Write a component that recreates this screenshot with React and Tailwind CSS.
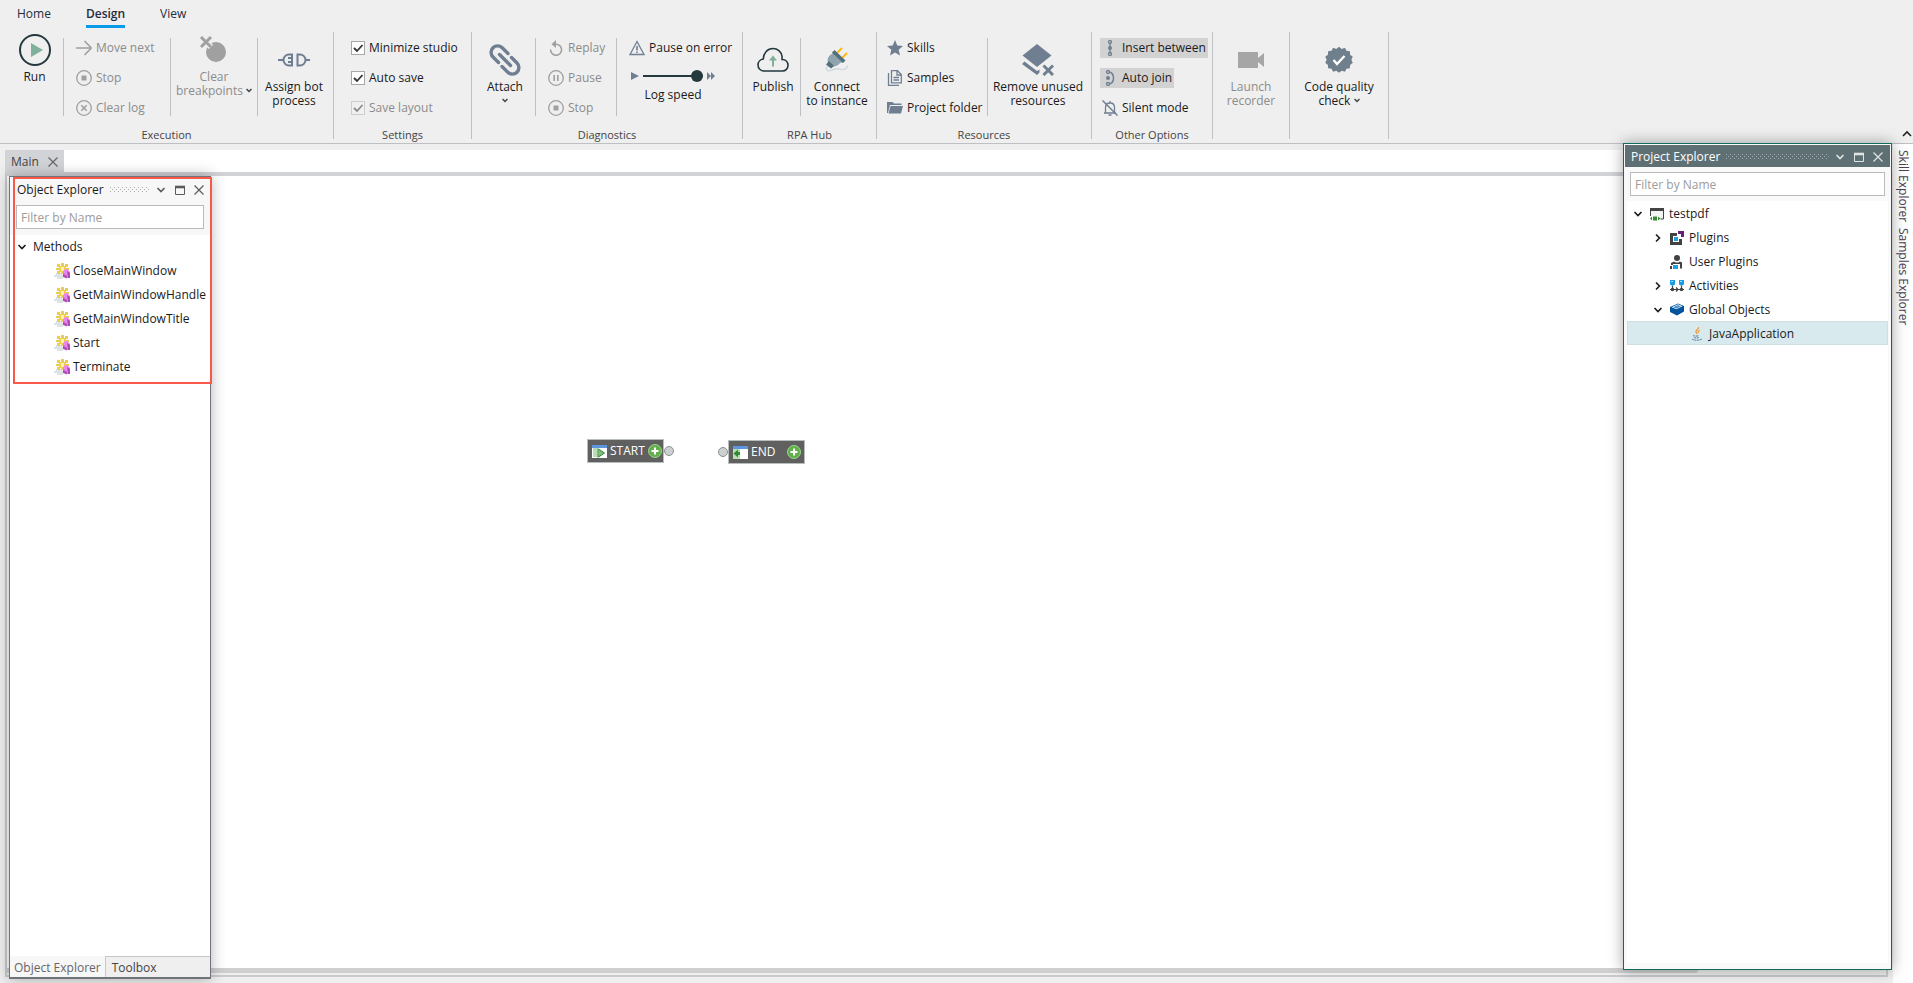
import React, { useState } from 'react';

/* ---------- small shared glyphs ---------- */

function Chevron({ className = '', dir = 'down' }) {
  const d = { down: 'M1.5 3 5 6.5 8.5 3', right: 'M3 1.5 6.5 5 3 8.5', up: 'M1 7 5 3 9 7' }[dir];
  return (
    <svg viewBox="0 0 10 10" className={`size-[10px] shrink-0 ${className}`} fill="none" stroke="currentColor" strokeWidth="1.6">
      <path d={d} />
    </svg>
  );
}

function SmallChevron() {
  return (
    <svg viewBox="0 0 6 5" className="inline-block w-[6px] h-[5px] mb-[2px]" fill="none" stroke="#444" strokeWidth="1.5">
      <path d="M.5 1 3 3.5 5.5 1" />
    </svg>
  );
}

function CloseIcon() {
  return (
    <svg viewBox="0 0 10 10" className="size-[10px]" fill="none" stroke="currentColor" strokeWidth="1.2">
      <path d="M.5.5l9 9M9.5.5l-9 9" />
    </svg>
  );
}

function MaximizeIcon() {
  return (
    <svg viewBox="0 0 10 10" className="size-[10px]" fill="none" stroke="currentColor">
      <path d="M.5 1.5h9v8h-9z" />
      <path d="M0 2h10" strokeWidth="2.6" />
    </svg>
  );
}

/* ---------- ribbon icons ---------- */

const RunIcon = () => (
  <svg viewBox="0 0 32 32" className="size-8">
    <circle cx="16" cy="16" r="15" fill="none" stroke="#24393e" strokeWidth="2" />
    <path d="M12 9v14l12-7z" fill="#7fb09b" />
  </svg>
);

const ClearBreakpointsIcon = () => (
  <svg viewBox="0 0 32 32" className="size-8">
    <circle cx="18" cy="18" r="10" fill="#a0a0a0" />
    <path d="M3 3l10 10M13 3L3 13" stroke="#efefef" strokeWidth="6" />
    <path d="M3 3l10 10M13 3L3 13" stroke="#a0a0a0" strokeWidth="3" />
  </svg>
);

const PlugsIcon = () => (
  <svg viewBox="0 0 32 32" className="size-8" fill="none" stroke="#6f7f91" strokeWidth="2">
    <path d="M0 16h5M14 10.500h-3a5.500 5.500 0 0 0 0 11h3M14 9.500v13M10 14h4M10 18h4" />
    <path d="M19.500 10.500v11h2.500a5.500 5.500 0 0 0 0-11zM27.500 16h4.500" />
  </svg>
);

const LinkIcon = () => (
  <svg viewBox="0 0 32 32" className="size-8" fill="none" stroke="#6f7f91" strokeWidth="3.400" strokeLinecap="round">
    <path d="M9.500 18.500 4 13a6.500 6.500 0 0 1 0-9.200a6.500 6.500 0 0 1 9.200 0L19 9.500" />
    <path d="M10.500 10.500l11 11" />
    <path d="M13 22.500l5.800 5.700a6.500 6.500 0 0 0 9.200 0a6.500 6.500 0 0 0 0-9.200L22.500 13.500" />
  </svg>
);

const CloudIcon = () => (
  <svg viewBox="0 0 32 32" className="size-8">
    <path
      d="M7 27a6 6 0 0 1-6-6c0-3.200 2.300-5.600 5.300-6C6.500 9 10.500 4.500 16 4.500c4.500 0 8.300 3 9 7.800c.2 1.300.1 2.200 0 3.200 3.500-.2 6 2.300 6 5.700 0 3.300-2.400 5.800-5.500 5.800z"
      fill="none" stroke="#24393e" strokeWidth="1.600"
    />
    <path d="M16 11.500l4 5h-3v6h-2v-6h-3z" fill="#7fb09b" />
  </svg>
);

const PowerPlugIcon = () => (
  <svg viewBox="0 0 32 32" className="size-8">
    <path d="M7 22c-3 2-2 5.500 2 4.500s6-2.500 9-1.500 7 1 9-3.500" fill="none" stroke="#cfd8dc" strokeWidth="1.400" />
    <path d="M16 9l5-5M21 14l5-5" stroke="#fdbb11" strokeWidth="2" />
    <path d="M12 8l11 10-4 1c-2 3-6 4-9 3l-3-3c-1-4 0-7 4-9z" fill="#90a4ae" />
    <path d="M13.500 6l11 10.500-2.500 2.500L11 8.500z" fill="#546e7a" />
    <path d="M8 17l5 5-3 2.500-5-4z" fill="#546e7a" />
  </svg>
);

const LayersRemoveIcon = () => (
  <svg viewBox="0 0 32 32" className="size-8" fill="#6f7f91">
    <path d="M15 0l14.500 11.500L15 23 .5 11.500z" />
    <path d="M2.500 17.500L0 20l15 11 2.500-2.500v-3L15 27z" />
    <path d="M21.500 21.500l9.500 9.500M31 21.500L21.500 31" stroke="#6f7f91" strokeWidth="3" />
  </svg>
);

const CameraIcon = () => (
  <svg viewBox="0 0 32 32" className="size-8" fill="#a6a6a6">
    <path d="M3 8h20v6l6-5v14l-6-5v6H3z" />
  </svg>
);

const BadgeIcon = () => (
  <svg viewBox="0 0 32 32" className="size-8">
    <path
      d="M16 1.500l3 2.400 3.600-1.300 1.700 3.400 3.800.5.200 3.800 3 2.300-1.600 3.400 1.600 3.400-3 2.300-.2 3.800-3.800.5-1.700 3.400-3.600-1.300-3 2.400-3-2.400-3.600 1.300-1.700-3.400-3.800-.5-.2-3.800-3-2.300L2.300 16 .7 12.600l3-2.300.2-3.800L7.700 6l1.700-3.400L13 3.900z"
      fill="#6f7f8c" transform="translate(1.600 1.400) scale(.9)"
    />
    <path d="M10.500 16l3.500 4 7.500-8" fill="none" stroke="#fff" strokeWidth="2.400" />
  </svg>
);

function Small({ children, color = '#6f7f91' }) {
  return (
    <svg viewBox="0 0 16 16" className="size-4 shrink-0" fill="none" stroke={color} strokeWidth="1.3">
      {children}
    </svg>
  );
}

const GREY = '#a0a0a0';
const ArrowIcon = () => <Small color={GREY}><path d="M0 8h15M8.500 1l6.800 7-6.800 7" strokeWidth="1.600" /></Small>;
const StopIcon = () => <Small color={GREY}><circle cx="8" cy="8" r="7.300" /><path d="M5.500 5.500h5v5h-5z" fill={GREY} stroke="none" /></Small>;
const ClearLogIcon = () => <Small color={GREY}><circle cx="8" cy="8" r="7.300" /><path d="M5.300 5.300l5.400 5.400M10.700 5.300l-5.400 5.400" strokeWidth="1.600" /></Small>;
const PauseIcon = () => <Small color={GREY}><circle cx="8" cy="8" r="7.300" /><path d="M6.200 5v6M9.800 5v6" strokeWidth="1.600" /></Small>;
const ReplayIcon = () => (
  <Small color={GREY}>
    <path d="M2.600 9.500A5.500 5.500 0 1 0 8 4.300H5" strokeWidth="1.600" />
    <path d="M8 0v8L3.500 4.200z" fill={GREY} stroke="none" />
  </Small>
);
const WarningIcon = () => <Small><path d="M8 1.500L15 14.500H1z" /><path d="M8 6v4.500M8 11.500v1.500" strokeWidth="1.600" /></Small>;
const StarIcon = () => <Small><path d="M8 0l2.300 5.500 5.700.5-4.300 3.800L13 15.500 8 12.400 3 15.500l1.300-5.700L0 6l5.700-.5z" fill="#6f7f91" stroke="none" /></Small>;
const SamplesIcon = () => <Small><path d="M4.500.7h6l3.800 3.800v8.300H4.500zM10 1v4h4M1.500 3v12.300H12M6.500 7.500h5.500M6.500 10h5.500" /></Small>;
const FolderIcon = () => (
  <Small>
    <path d="M0 2h5.500L7 3.500h7.500V5H3L1 12.500V13H0z" fill="#6f7f91" stroke="none" />
    <path d="M3.500 6H16l-2 7.500H1.500z" fill="#6f7f91" stroke="none" />
  </Small>
);
const InsertIcon = () => (
  <Small>
    <path d="M8 3v10" />
    <circle cx="8" cy="2" r="1.500" fill="#d0d0d0" /><circle cx="8" cy="8" r="2" fill="#6f7f91" stroke="none" /><circle cx="8" cy="14" r="1.500" fill="#d0d0d0" />
  </Small>
);
const JoinIcon = () => (
  <Small>
    <path d="M7 2c6 1 6 11 0 12" strokeWidth="1.500" />
    <circle cx="6" cy="2" r="1.500" fill="#d0d0d0" /><circle cx="6" cy="8" r="2" fill="#6f7f91" stroke="none" /><circle cx="6" cy="14" r="1.500" fill="#d0d0d0" />
  </Small>
);
const BellOffIcon = () => (
  <Small>
    <path d="M2 13h12M3.500 13V7.500C3.500 4.500 5.500 3 8 3s4.500 1.500 4.500 4.500V13M8 1v2M6.500 15h3" />
    <path d="M.5.5l15 15" strokeWidth="1.500" />
  </Small>
);

/* ---------- ribbon building blocks ---------- */

function Group({ label, children }) {
  return (
    <section className="flex flex-col justify-between h-[107px] border-r border-[#bfc0c4]">
      <div className="flex h-[84px] pt-[6px]">{children}</div>
      <div className="text-center text-[11px] leading-[8px] text-[#444]">{label}</div>
    </section>
  );
}

function Cell({ className, last, children }) {
  return (
    <div className={`${className} h-[78px] ${last ? '' : 'border-r border-[#bfc0c4]'}`}>
      {children}
    </div>
  );
}

function BigButton({ icon, lines, disabled, arrow, raised }) {
  return (
    <button
      className={`flex w-full flex-col items-center gap-1 text-center leading-[14px] ${raised ? '-mt-1' : 'pt-[6px]'} ${disabled ? 'text-[#8c8c8c]' : 'text-[#1a1a1a]'}`}
    >
      {icon}
      <span>
        {lines.map((line, i) => (
          <span key={line} className="block whitespace-nowrap">
            {line}
            {arrow === 'inline' && i === lines.length - 1 && <> <SmallChevron /></>}
          </span>
        ))}
        {arrow === 'below' && <span className="block"><SmallChevron /></span>}
      </span>
    </button>
  );
}

function SmallButton({ icon, label, disabled }) {
  return (
    <button className={`flex h-5 items-center gap-1 whitespace-nowrap ${disabled ? 'text-[#8c8c8c]' : 'text-[#1a1a1a]'}`}>
      {icon}
      {label}
    </button>
  );
}

function OptionButton({ icon, label, active }) {
  return (
    <button
      aria-pressed={!!active}
      className={`flex h-5 items-center gap-1 px-[2px] whitespace-nowrap text-[#1a1a1a] ${active ? 'bg-[#d2d2d2]' : ''}`}
    >
      {icon}
      {label}
    </button>
  );
}

function Check({ label, disabled }) {
  const [checked, setChecked] = useState(true);
  return (
    <label className={`flex h-5 items-center gap-1 whitespace-nowrap ${disabled ? 'text-[#8c8c8c]' : 'text-[#1a1a1a]'}`}>
      <span className="grid size-[14px]">
        <input
          type="checkbox"
          checked={checked}
          disabled={disabled}
          onChange={(e) => setChecked(e.target.checked)}
          className="peer col-start-1 row-start-1 size-[14px] appearance-none border border-[#a8a8a8] bg-white disabled:border-[#cdcdcd] disabled:bg-[#f0f0f0]"
        />
        <svg
          viewBox="0 0 14 14"
          className="pointer-events-none invisible col-start-1 row-start-1 size-[14px] peer-checked:visible"
          fill="none" stroke={disabled ? '#8c8c8c' : '#333'} strokeWidth="1.8"
        >
          <path d="M3 7l3 3 5.500-6" />
        </svg>
      </span>
      {label}
    </label>
  );
}

function Stack({ children }) {
  return <div className="flex flex-col items-start gap-[10px]">{children}</div>;
}

function Ribbon() {
  const [speed, setSpeed] = useState(100);
  return (
    <div className="flex border-b border-[#bfc0c4] pb-1">
      <Group label="Execution">
        <Cell className="w-16 pl-[6px]"><BigButton raised icon={<RunIcon />} lines={['Run']} /></Cell>
        <Cell className="w-[107px] pl-3">
          <Stack>
            <SmallButton disabled icon={<ArrowIcon />} label="Move next" />
            <SmallButton disabled icon={<StopIcon />} label="Stop" />
            <SmallButton disabled icon={<ClearLogIcon />} label="Clear log" />
          </Stack>
        </Cell>
        <Cell className="w-[87px]"><BigButton raised disabled arrow="inline" icon={<ClearBreakpointsIcon />} lines={['Clear', 'breakpoints']} /></Cell>
        <Cell className="w-[75px] pr-[3px]" last><BigButton icon={<PlugsIcon />} lines={['Assign bot', 'process']} /></Cell>
      </Group>
      <Group label="Settings">
        <Cell className="w-[137px] pl-[17px]" last>
          <Stack>
            <Check label="Minimize studio" />
            <Check label="Auto save" />
            <Check label="Save layout" disabled />
          </Stack>
        </Cell>
      </Group>
      <Group label="Diagnostics">
        <Cell className="w-16 pl-[3px]"><BigButton arrow="below" icon={<LinkIcon />} lines={['Attach']} /></Cell>
        <Cell className="w-[81px] pl-3">
          <Stack>
            <SmallButton disabled icon={<ReplayIcon />} label="Replay" />
            <SmallButton disabled icon={<PauseIcon />} label="Pause" />
            <SmallButton disabled icon={<StopIcon />} label="Stop" />
          </Stack>
        </Cell>
        <Cell className="w-[125px] pl-3" last>
          <SmallButton icon={<WarningIcon />} label="Pause on error" />
          <label className="flex w-[84px] flex-col items-center pt-3 ml-[2px] text-[#1a1a1a]">
            <span className="flex w-full items-center gap-1">
              <svg viewBox="0 0 8 8" className="size-2 shrink-0" fill="#6f7f91"><path d="M0 0l8 4-8 4z" /></svg>
              <input
                type="range"
                value={speed}
                onChange={(e) => setSpeed(Number(e.target.value))}
                className="h-3 w-[60px] appearance-none bg-transparent [&::-webkit-slider-runnable-track]:h-[2px] [&::-webkit-slider-runnable-track]:bg-[#24393e] [&::-webkit-slider-thumb]:-mt-[5px] [&::-webkit-slider-thumb]:size-3 [&::-webkit-slider-thumb]:appearance-none [&::-webkit-slider-thumb]:rounded-full [&::-webkit-slider-thumb]:bg-[#24393e]"
              />
              <svg viewBox="0 0 8 8" className="size-2 shrink-0" fill="#6f7f91"><path d="M0 0l4 4-4 4zM4 0l4 4-4 4z" /></svg>
            </span>
            <span className="pt-[6px] leading-[14px]">Log speed</span>
          </label>
        </Cell>
      </Group>
      <Group label="RPA Hub">
        <Cell className="w-[58px] pl-[3px]"><BigButton icon={<CloudIcon />} lines={['Publish']} /></Cell>
        <Cell className="w-[75px] pr-[3px]" last><BigButton icon={<PowerPlugIcon />} lines={['Connect', 'to instance']} /></Cell>
      </Group>
      <Group label="Resources">
        <Cell className="w-[111px] pl-[10px]">
          <Stack>
            <SmallButton icon={<StarIcon />} label="Skills" />
            <SmallButton icon={<SamplesIcon />} label="Samples" />
            <SmallButton icon={<FolderIcon />} label="Project folder" />
          </Stack>
        </Cell>
        <Cell className="w-[103px] pr-[3px]" last><BigButton icon={<LayersRemoveIcon />} lines={['Remove unused', 'resources']} /></Cell>
      </Group>
      <Group label="Other Options">
        <Cell className="w-[120px] pl-2" last>
          <Stack>
            <OptionButton active icon={<InsertIcon />} label="Insert between" />
            <OptionButton active icon={<JoinIcon />} label="Auto join" />
            <OptionButton icon={<BellOffIcon />} label="Silent mode" />
          </Stack>
        </Cell>
      </Group>
      <Group>
        <Cell className="w-[76px]" last><BigButton disabled icon={<CameraIcon />} lines={['Launch', 'recorder']} /></Cell>
      </Group>
      <Group>
        <Cell className="w-[98px]" last><BigButton arrow="inline" icon={<BadgeIcon />} lines={['Code quality', 'check']} /></Cell>
      </Group>
      <button aria-label="Collapse ribbon" className="ml-auto self-end pr-px text-[#222]">
        <Chevron dir="up" />
      </button>
    </div>
  );
}

/* ---------- tool windows ---------- */

function Grip({ id, color }) {
  return (
    <svg className="mx-[6px] h-[6px] min-w-0 flex-1" width="100%" height="6">
      <defs>
        <pattern id={id} width="4" height="4" patternUnits="userSpaceOnUse">
          <path d="M0 0h1v1H0zM2 2h1v1H2z" fill={color} />
        </pattern>
      </defs>
      <rect width="100%" height="6" fill={`url(#${id})`} />
    </svg>
  );
}

function WindowButtons() {
  return (
    <div className="flex items-center gap-[9px]">
      <button aria-label="Window menu"><Chevron /></button>
      <button aria-label="Maximize"><MaximizeIcon /></button>
      <button aria-label="Close"><CloseIcon /></button>
    </div>
  );
}

function MethodIcon() {
  return (
    <svg viewBox="0 0 16 16" className="size-4 shrink-0">
      <path d="M2 11h6M0 13h9M3 15h6" stroke="#bcc7cf" />
      <path d="M3 1h3v3H3zM7 0h3v3H7zM11 1h3v3h-3zM3 8h3v3H3zM7 9h3v2H7zM2 5h3v2H2zM12 5h3v2h-3z" fill="#eccb52" />
      <path d="M5 3h7v6H5z" fill="#f1cf4a" />
      <path d="M7 4h3v4H7z" fill="#fdf3b4" />
      <path d="M9 8.500L11 6h2.500L16 9v6h-2.500L9 13z" fill="#ea86ec" />
      <path d="M9 10.500l4 2.500v2.500L9 14zM13 8l3 2v5h-2z" fill="#b04cb8" />
    </svg>
  );
}

const METHODS = ['CloseMainWindow', 'GetMainWindowHandle', 'GetMainWindowTitle', 'Start', 'Terminate'];

function ObjectExplorer() {
  return (
    <aside className="absolute bottom-1 left-[9px] top-8 flex w-[202px] flex-col border border-b-2 border-[#70747a] bg-white shadow-[0_0_14px_rgba(0,0,0,0.3)]">
      <div className="bg-[#f7f7f7] px-[6px] pb-[6px]">
        <div className="mb-[2px] flex h-[26px] items-center pl-px text-[#5a5a5a]">
          <h2 className="text-[#1a1a1a]">Object Explorer</h2>
          <Grip id="grip-object" color="#b0b0b0" />
          <WindowButtons />
        </div>
        <input
          type="text"
          aria-label="Filter methods by name"
          placeholder="Filter by Name"
          className="block h-6 w-full border border-[#b9babd] bg-white px-1 placeholder:text-[#9c9c9c]"
        />
      </div>
      <div className="flex-1 text-[#1a1a1a]">
        <button className="flex h-6 items-center gap-[6px] pl-[7px]"><Chevron />Methods</button>
        <ul>
          {METHODS.map((name) => (
            <li key={name} className="flex h-6 items-center gap-[3px] pl-11"><MethodIcon />{name}</li>
          ))}
        </ul>
      </div>
      <div className="flex h-[21px] bg-[#efefef]">
        <button className="bg-[#f7f7f7] px-1 pt-[2px] text-[#666]">Object Explorer</button>
        <button className="flex-1 border-l border-t border-[#c8c8c8] pl-[6px] pt-px text-left text-[#444]">Toolbox</button>
      </div>
      {/* highlight frame round the methods list */}
      <div className="pointer-events-none absolute left-[3px] top-0 h-[207px] w-[199px] border-2 border-[#f9584a]" />
    </aside>
  );
}

const ProjectIcon = () => (
  <svg viewBox="0 0 14 14" className="size-[14px] shrink-0">
    <path d="M.5 1.500h13v10.500H.5z" fill="#f4f4f4" stroke="#444" />
    <path d="M0 1h14v3H0z" fill="#444" />
    <path d="M0 9h10.500v5H0z" fill="#fff" />
    <path d="M0 11.500l2-2v4zM3 9.500h4v4H3zM8 9.500l2.500 2-2.500 2z" fill="#388a34" />
  </svg>
);

const PluginsIcon = () => (
  <svg viewBox="0 0 14 14" className="size-[14px] shrink-0">
    <path d="M0 2h7v3H3v6h6V8h3v6H0z" fill="#424242" />
    <path d="M8 0h6v6h-3V3H8z" fill="#68217a" />
    <path d="M4 6h4v4H4z" fill="#1ba1e2" />
  </svg>
);

const UserPluginsIcon = () => (
  <svg viewBox="0 0 14 14" className="size-[14px] shrink-0">
    <circle cx="7" cy="3" r="3" fill="#424242" />
    <path d="M1 8l3-1.500 1.500 1h3L10 6.500l2 1v6h-2V9H3v1H1zM0 11h2v3H0z" fill="#424242" />
    <path d="M3 10h5v4H3z" fill="#1ba1e2" />
  </svg>
);

const ActivitiesIcon = () => (
  <svg viewBox="0 0 14 14" className="size-[14px] shrink-0">
    <path d="M0 1h5v4.500L2.500 7 0 5.500zM9 1h5v4.500L11.500 7 9 5.500z" fill="#1b9be0" />
    <path d="M1 2h2v1H1zM10 2h2v1h-2z" fill="#a6dcf7" />
    <path d="M2.500 7v2M11.500 7v2M0 10.500h14M6 8.500l2 2-2 2" fill="none" stroke="#424242" strokeWidth="1.200" />
    <circle cx="2.500" cy="10.500" r="1.800" fill="#424242" /><circle cx="11.500" cy="10.500" r="1.800" fill="#424242" />
  </svg>
);

const GlobalIcon = () => (
  <svg viewBox="0 0 14 14" className="size-[14px] shrink-0">
    <path d="M0 4l8-3.500L14 3v5.500L7 12.500 0 9z" fill="#00539c" />
    <path d="M1.500 4.200L8 1.300 12.500 3.300 6.500 6.300z" fill="#fff" />
    <path d="M3 4.300l5-2.300L11 3.400 6.500 5.700z" fill="#4f97cf" />
  </svg>
);

const JavaIcon = () => (
  <svg viewBox="0 0 10 14" className="h-[14px] w-[10px] shrink-0" fill="none">
    <path d="M6.500 0c1 2-3.500 3-2.500 5l1 2M8 3.500C6 4 5.500 5 6.500 6" stroke="#f0932b" strokeWidth="1.100" />
    <path d="M1 8.500c1 .8 5 .8 6 0M2 10.500c1 .6 4 .6 5 0M0 12c2 1.600 7.500 1.600 10 0" stroke="#4e7896" strokeDasharray="2 .7" />
  </svg>
);

const PROJECT = [
  { label: 'Plugins', Icon: PluginsIcon, dir: 'right' },
  { label: 'User Plugins', Icon: UserPluginsIcon },
  { label: 'Activities', Icon: ActivitiesIcon, dir: 'right' },
  { label: 'Global Objects', Icon: GlobalIcon, dir: 'down' },
];

function ProjectExplorer() {
  return (
    <aside className="absolute -top-px bottom-[13px] right-[21px] flex w-[269px] flex-col border border-[#0f6b5e] bg-[#f9f9f9] p-px shadow-[0_0_14px_rgba(0,0,0,0.35)]">
      <div className="flex h-[22px] shrink-0 items-center bg-[#5f7074] pl-[6px] pr-[7px] pt-[2px] text-[#dfe4e5]">
        <h2 className="text-white">Project Explorer</h2>
        <Grip id="grip-project" color="#a3aeb1" />
        <WindowButtons />
      </div>
      <div className="flex px-[5px] py-[5px]">
        <input
          type="text"
          aria-label="Filter project by name"
          placeholder="Filter by Name"
          className="h-6 min-w-0 flex-1 border border-[#b9babd] bg-white px-1 placeholder:text-[#9c9c9c]"
        />
      </div>
      <div className="mx-[2px] mb-[5px] flex-1 bg-white text-[#1a1a1a]">
        <button className="flex h-6 items-center gap-[5px] pl-[6px] pt-[2px]">
          <Chevron /><span className="ml-[2px]"><ProjectIcon /></span>testpdf
        </button>
        <ul>
          {PROJECT.map(({ label, Icon, dir }) => (
            <li key={label}>
              <button className="flex h-6 items-center gap-[5px] pl-[26px] pt-[2px]">
                {dir ? <Chevron dir={dir} /> : <span className="w-[10px]" />}
                <span className="ml-[2px]"><Icon /></span>
                {label}
              </button>
            </li>
          ))}
          <li className="flex h-6 items-center gap-[7px] border border-[#cfe0e2] bg-[#d9eaee] pl-16 pt-[2px]">
            <JavaIcon />JavaApplication
          </li>
        </ul>
      </div>
    </aside>
  );
}

/* ---------- canvas ---------- */

function PlusIcon() {
  return (
    <svg viewBox="0 0 14 14" className="size-[14px]">
      <circle cx="7" cy="7" r="6.500" fill="#62b04c" stroke="#9ad48a" />
      <path d="M7 3.500v7M3.500 7h7" stroke="#fff" strokeWidth="2" />
    </svg>
  );
}

function StartIcon() {
  return (
    <svg viewBox="0 0 15 13" className="h-[13px] w-[15px] shrink-0">
      <path d="M0 0h15v13H0z" fill="#fff" />
      <path d="M0 0h15v3H0z" fill="#5f95dd" />
      <path d="M1 3h4.500v9H1z" fill="#b5e0b0" />
      <path d="M6 3.500v9M6.500 4l6 4-6 4" fill="#7dbf78" stroke="#2f7d34" />
    </svg>
  );
}

function EndIcon() {
  return (
    <svg viewBox="0 0 15 13" className="h-[13px] w-[15px] shrink-0">
      <path d="M0 0h15v13H0z" fill="#fff" />
      <path d="M0 0h15v3H0z" fill="#5f95dd" />
      <path d="M0 3h7v10H0z" fill="#b5e0b0" />
      <path d="M.5 7.500l4.500-4v2.500h2v3H5v2.500z" fill="#2f8a34" />
    </svg>
  );
}

function Node({ label, icon, flip, className }) {
  return (
    <div className={`absolute flex items-center ${flip ? 'flex-row-reverse' : ''} ${className}`}>
      <div className="flex h-6 w-[77px] items-center gap-[3px] border border-[#b8bebe] bg-[#606060] pl-1 pr-[3px] text-white">
        {icon}
        {label}
        <button aria-label={`Add to ${label}`} className="ml-auto"><PlusIcon /></button>
      </div>
      <span className="size-[10px] rounded-full border border-[#8c9090] bg-[#cdd0d0]" />
    </div>
  );
}

export default function App() {
  return (
    <div className='flex h-screen flex-col overflow-hidden bg-[#efefef] font-["Open_Sans","Noto_Sans",sans-serif] text-[12px] leading-[16px]'>
      <nav className="flex h-8 gap-[35px] pl-[17px] pt-[6px] text-[#1f2d3d]">
        <a href="#home" className="h-[18px]">Home</a>
        <a href="#design" className="h-[22px] border-b-3 border-[#0a9be8] font-semibold">Design</a>
        <a href="#view" className="h-[18px]">View</a>
      </nav>

      <Ribbon />

      <main className="relative flex min-h-0 flex-1">
        <div className="flex min-w-0 flex-1 flex-col pb-[6px] pl-[5px] pt-[6px]">
          <div className="flex h-[22px] bg-white">
            <div className="flex items-center gap-[9px] bg-[#d2d3d7] px-[6px] pt-[2px] text-[#444]">
              Main
              <button aria-label="Close Main" className="text-[#666]"><CloseIcon /></button>
            </div>
          </div>
          <div className="mr-[5px] flex flex-1 flex-col border-2 border-t-4 border-[#c9cacd] border-t-[#d2d3d7] bg-[#efefef]">
            <div className="relative flex-1 bg-white">
              <Node label="START" icon={<StartIcon />} className="left-[580px] top-[263px]" />
              <Node label="END" icon={<EndIcon />} flip className="left-[711px] top-[264px]" />
            </div>
            {/* horizontal scrollbar */}
            <div className="h-[7px]">
              <div className="h-[5px] w-[90%] rounded-r-sm bg-[#cfcfcf]" />
            </div>
          </div>
        </div>

        <div className="flex w-5 shrink-0 flex-col items-center gap-[6px] bg-white pt-[6px] text-[#4a4450]">
          <button className="[writing-mode:vertical-rl]">Skill Explorer</button>
          <button className="[writing-mode:vertical-rl]">Samples Explorer</button>
        </div>

        <ObjectExplorer />
        <ProjectExplorer />
      </main>
    </div>
  );
}
